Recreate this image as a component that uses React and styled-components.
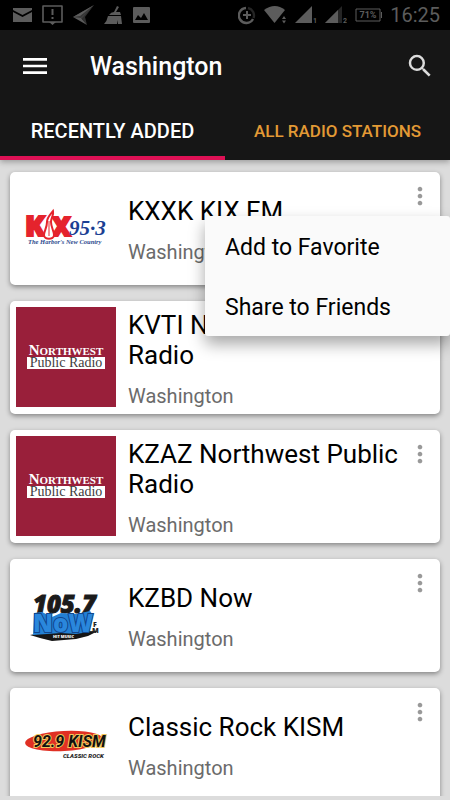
import React from "react";
import styled, { createGlobalStyle } from "styled-components";
import { MdMenu, MdMoreVert, MdSearch } from "react-icons/md";

const KixLogo = () => (
  <LogoArt viewBox="0 0 100 100" role="img" aria-label="KIX 95.3">
    <rect width="100" height="100" fill="#fff" />
    <g
      fill="#e5232d"
      stroke="#e5232d"
      strokeWidth="2"
      fontFamily="Open Sans, sans-serif"
      fontWeight="800"
    >
      <text x="9" y="58" fontSize="29">
        K
      </text>
      <text x="36" y="58" fontSize="26">
        X
      </text>
    </g>
    <path
      d="M37 33 C34 37 31 39 31 44 C31 50 28 53 28 57 C28 62 38 62 38 57 C38 53 35 49 35 44 C35 40 38 37 37 33Z"
      fill="#fff"
      stroke="#e5232d"
      strokeWidth="2"
    />
    <path d="M33 43V58" stroke="#e5232d" strokeWidth="1" />
    <text
      x="53"
      y="57"
      fontFamily="Liberation Serif, serif"
      fontStyle="italic"
      fontWeight="700"
      fontSize="21"
      fill="#1b3f93"
    >
      95·3
    </text>
    <text
      x="12"
      y="66"
      fontFamily="Liberation Serif, serif"
      fontStyle="italic"
      fontWeight="700"
      fontSize="6.500"
      fill="#2c4a8e"
    >
      The Harbor's New Country
    </text>
  </LogoArt>
);

const NorthwestLogo = () => (
  <LogoArt viewBox="0 0 100 100" role="img" aria-label="Northwest Public Radio">
    <rect width="100" height="100" fill="#991f3a" />
    <g fontFamily="Liberation Serif, serif" textAnchor="middle">
      <text x="50" y="48" fill="#fff" fontWeight="700" fontSize="11">
        <tspan fontSize="15">N</tspan>ORTHWEST
      </text>
      <rect x="11" y="50" width="78" height="12" fill="#fff" />
      <text x="50" y="60" fill="#3d3d3d" fontSize="14">
        Public Radio
      </text>
    </g>
  </LogoArt>
);

const NowLogo = () => (
  <LogoArt viewBox="0 0 100 100" role="img" aria-label="105.7 Now FM">
    <rect width="100" height="100" fill="#fff" />
    <g fontFamily="Open Sans, sans-serif" fontWeight="800">
      <text
        x="17"
        y="48"
        fontStyle="italic"
        fontSize="24"
        fill="#1b1b1b"
        stroke="#1b1b1b"
        strokeWidth="1"
      >
        105.7
      </text>
      <path d="M14 70 L30 67 L82 66 L72 71 L60 74 L36 76 L24 73Z" fill="#161616" />
      <path
        d="M18 48 L26 47 L36 52 L45 48 L60 49 L74 46 L77 50 L73 67 L60 69 L45 68 L17 70Z"
        fill="#2380d4"
      />
      <text
        x="17"
        y="67"
        fontSize="24"
        fill="#2a87dc"
        stroke="#12468c"
        strokeWidth="2"
        paintOrder="stroke"
      >
        NoW
      </text>
      <text x="77" y="62" fontSize="7" fill="#222">
        F
      </text>
      <text x="76" y="68" fontSize="7" fill="#222">
        M
      </text>
      <text x="37" y="73" fontSize="4" fill="#fff">
        HIT MUSIC
      </text>
    </g>
  </LogoArt>
);

const KismLogo = () => (
  <LogoArt viewBox="0 0 100 100" role="img" aria-label="92.9 KISM Classic Rock">
    <rect width="100" height="100" fill="#fff" />
    <ellipse cx="48" cy="47" rx="39" ry="10" fill="#e03024" transform="rotate(-3 48 47)" />
    <g fontStyle="italic">
      <text
        x="17"
        y="53"
        fontFamily="Liberation Sans Narrow, Roboto, sans-serif"
        fontWeight="700"
        fontSize="16"
        fill="#111"
        stroke="#f0c65a"
        strokeWidth="2"
        paintOrder="stroke"
      >
        92.9 KISM
      </text>
      <text
        x="47"
        y="64"
        fontFamily="Roboto, sans-serif"
        fontWeight="900"
        fontSize="6"
        fill="#222"
      >
        CLASSIC ROCK
      </text>
    </g>
  </LogoArt>
);

const stations = [
  { id: "kxxk", name: "KXXK KIX FM", state: "Washington", Logo: KixLogo },
  { id: "kvti", name: "KVTI Northwest Public Radio", state: "Washington", Logo: NorthwestLogo },
  { id: "kzaz", name: "KZAZ Northwest Public Radio", state: "Washington", Logo: NorthwestLogo },
  { id: "kzbd", name: "KZBD Now", state: "Washington", Logo: NowLogo },
  { id: "kism", name: "Classic Rock KISM", state: "Washington", Logo: KismLogo },
];

const tabs = [
  { id: "recent", label: "RECENTLY ADDED" },
  { id: "all", label: "ALL RADIO STATIONS" },
];

const StatusIcons = () => (
  <StatusBar>
    <StatusGroup $gap={10}>
      <StatusIcon $width={19} viewBox="0 0 19 20">
        <path d="M0 3H19V5L9.500 10L0 5Z M0 7L9.500 12L19 7V17H0Z" />
      </StatusIcon>
      <StatusIcon $width={21} viewBox="0 0 21 20">
        <path
          d="M1 1H20V17H1Z"
          fill="none"
          stroke="currentColor"
          strokeWidth="1.600"
          strokeLinejoin="round"
        />
        <path d="M9.500 4H11.500V10H9.500Z M9.500 12H11.500V14H9.500Z M7 17H14L10.500 20Z" />
      </StatusIcon>
      <StatusIcon $width={21} viewBox="0 0 21 20">
        <path d="M21 0L0 12L8 14Z" opacity="0.6" />
        <path d="M21 0L0 12L7 11Z M0 12L8 13L14 20Z" />
        <path d="M21 0L8 13L14 20L12 12Z" opacity="0.5" />
      </StatusIcon>
      <StatusIcon $width={19} viewBox="0 0 19 20">
        <path d="M13 1L15 2L12 7H16L17 10H5Q7 7 10 7Z M4 11H17L18 19H14L13 15V19H0Q3 16 4 11Z" />
      </StatusIcon>
      <StatusIcon $width={17} viewBox="0 0 17 20">
        <path
          fillRule="evenodd"
          d="M1 2H16Q17 2 17 3V17Q17 18 16 18H1Q0 18 0 17V3Q0 2 1 2Z M2 15H15L11 8L8 13L5 10Z"
        />
      </StatusIcon>
    </StatusGroup>
    <StatusGroup $gap={8}>
      <StatusIcon $width={18} viewBox="0 0 18 20">
        <path
          d="M8 3A7.500 7.500 0 1 0 15 14"
          fill="none"
          stroke="currentColor"
          strokeWidth="2.400"
        />
        <path
          d="M10 3A7.500 7.500 0 0 1 15.500 13"
          fill="none"
          stroke="currentColor"
          strokeWidth="2.400"
          opacity="0.4"
        />
        <path d="M8 6H10V9H13V11H10V14H8V11H5V9H8Z" />
      </StatusIcon>
      <StatusIcon $width={23} viewBox="0 0 23 20">
        <path d="M0 5Q11 -3 21 5L10.500 18Z" />
        <path d="M18 14L20 11L22 14Z M18 15.500H22L20 18.500Z" />
      </StatusIcon>
      <StatusIcon $width={22} viewBox="0 0 22 20">
        <path d="M17 1V18H0Z" />
        <text x="18" y="18" fontSize="7" fontWeight="700">
          1
        </text>
      </StatusIcon>
      <StatusIcon $width={22} viewBox="0 0 22 20">
        <path d="M17 1V18H0Z" opacity="0.4" />
        <path d="M13 5V18H0Z" />
        <text x="18" y="18" fontSize="7" fontWeight="700">
          2
        </text>
      </StatusIcon>
      <StatusIcon $width={27} viewBox="0 0 27 20">
        <path
          d="M1 4H25V16H1Z M26.500 7V13"
          fill="none"
          stroke="currentColor"
          strokeWidth="1"
        />
        <text x="13" y="13" fontSize="9" fontWeight="700" textAnchor="middle">
          71%
        </text>
      </StatusIcon>
      <Clock>16:25</Clock>
    </StatusGroup>
  </StatusBar>
);

const App = () => {
  const [activeTab, setActiveTab] = React.useState("recent");
  const [openMenu, setOpenMenu] = React.useState("kxxk");

  const toggleMenu = (id) => {
    setOpenMenu(openMenu === id ? null : id);
  };

  return (
    <Wrapper>
      <GlobalStyle />
      <StatusIcons />
      <Header>
        <Toolbar>
          <IconButton aria-label="Menu">
            <MdMenu size={32} />
          </IconButton>
          <Title>Washington</Title>
          <IconButton aria-label="Search">
            <MdSearch size={30} color="#dcdcdc" />
          </IconButton>
        </Toolbar>
        <Tabs role="tablist">
          {tabs.map((tab) => (
            <Tab
              key={tab.id}
              role="tab"
              aria-selected={activeTab === tab.id}
              $active={activeTab === tab.id}
              onClick={() => setActiveTab(tab.id)}
            >
              {tab.label}
            </Tab>
          ))}
        </Tabs>
      </Header>
      <StationList>
        {stations.map(({ id, name, state, Logo }) => (
          <Card key={id}>
            <Logo />
            <Info>
              <Name>{name}</Name>
              <State>{state}</State>
            </Info>
            <MoreButton aria-label={`Options for ${name}`} onClick={() => toggleMenu(id)}>
              <MdMoreVert size={28} />
            </MoreButton>
            {openMenu === id && (
              <Menu role="menu">
                <MenuItem role="menuitem" onClick={() => setOpenMenu(null)}>
                  Add to Favorite
                </MenuItem>
                <MenuItem role="menuitem" onClick={() => setOpenMenu(null)}>
                  Share to Friends
                </MenuItem>
              </Menu>
            )}
          </Card>
        ))}
      </StationList>
    </Wrapper>
  );
};

const GlobalStyle = createGlobalStyle`
  * {
    box-sizing: border-box;
  }
  body {
    margin: 0;
    background: #dcdcdc;
    font-family: Roboto, sans-serif;
  }
  button {
    border: none;
    padding: 0;
    background: transparent;
    font-family: inherit;
    cursor: pointer;
  }
`;

const Wrapper = styled.div`
  display: flex;
  flex-direction: column;
  height: 100vh;
  padding-bottom: 4px;
`;

const StatusBar = styled.div`
  display: flex;
  flex-shrink: 0;
  justify-content: space-between;
  align-items: center;
  height: 30px;
  padding: 0 10px 0 13px;
  background: #000;
  color: #5c5c5c;
`;

const StatusGroup = styled.div`
  display: flex;
  align-items: center;
  gap: ${(props) => props.$gap}px;
`;

const StatusIcon = styled.svg`
  width: ${(props) => props.$width}px;
  height: 20px;
  fill: currentColor;
`;

const Clock = styled.span`
  font-size: 20px;
  line-height: 30px;
`;

const Header = styled.header`
  position: relative;
  z-index: 1;
  flex-shrink: 0;
  background: #161616;
  color: #fff;
  box-shadow: 0 2px 6px rgba(0, 0, 0, 0.3);
`;

const Toolbar = styled.div`
  display: flex;
  align-items: center;
  height: 72px;
  padding: 0 15px 0 19px;
`;

const IconButton = styled.button`
  display: flex;
  color: #fff;
`;

const Title = styled.h1`
  flex: 1;
  margin: 0 0 0 39px;
  font-size: 25px;
  font-weight: 500;
`;

const Tabs = styled.div`
  display: flex;
  height: 58px;
`;

const Tab = styled.button`
  flex: 1;
  color: ${(props) => (props.$active ? "#fff" : "#e39a35")};
  font-size: ${(props) => (props.$active ? 20 : 17)}px;
  font-weight: 500;
  white-space: nowrap;
  box-shadow: ${(props) => (props.$active ? "inset 0 -4px #dd1155" : "none")};
`;

const StationList = styled.main`
  display: flex;
  flex: 1;
  flex-direction: column;
  gap: 16px;
  min-height: 0;
  padding: 12px 10px 0;
  overflow: hidden;
`;

const Card = styled.article`
  position: relative;
  display: flex;
  flex-shrink: 0;
  min-height: 113px;
  padding: 6px;
  border-radius: 5px;
  background: #fff;
  box-shadow: 0 2px 5px rgba(0, 0, 0, 0.4);
`;

const LogoArt = styled.svg`
  flex-shrink: 0;
  width: 100px;
  height: 100px;
`;

const Info = styled.div`
  display: flex;
  flex: 1;
  flex-direction: column;
  justify-content: center;
  gap: 16px;
  padding-left: 12px;
`;

const Name = styled.h2`
  margin: 0;
  color: #000;
  font-size: 26px;
  font-weight: 400;
  line-height: 30px;
`;

const State = styled.p`
  margin: 0;
  color: #6b6b6b;
  font-size: 20px;
  line-height: 20px;
`;

const MoreButton = styled.button`
  display: flex;
  align-self: flex-start;
  margin-top: 4px;
  color: #999;
`;

const Menu = styled.div`
  position: absolute;
  z-index: 2;
  top: 44px;
  right: -10px;
  width: 245px;
  border-radius: 3px;
  background: #fafafa;
  box-shadow: 0 8px 16px rgba(0, 0, 0, 0.35);
`;

const MenuItem = styled.button`
  display: block;
  width: 100%;
  height: 60px;
  padding: 2px 20px 0;
  color: #000;
  font-size: 23px;
  text-align: left;
`;

export default App;
